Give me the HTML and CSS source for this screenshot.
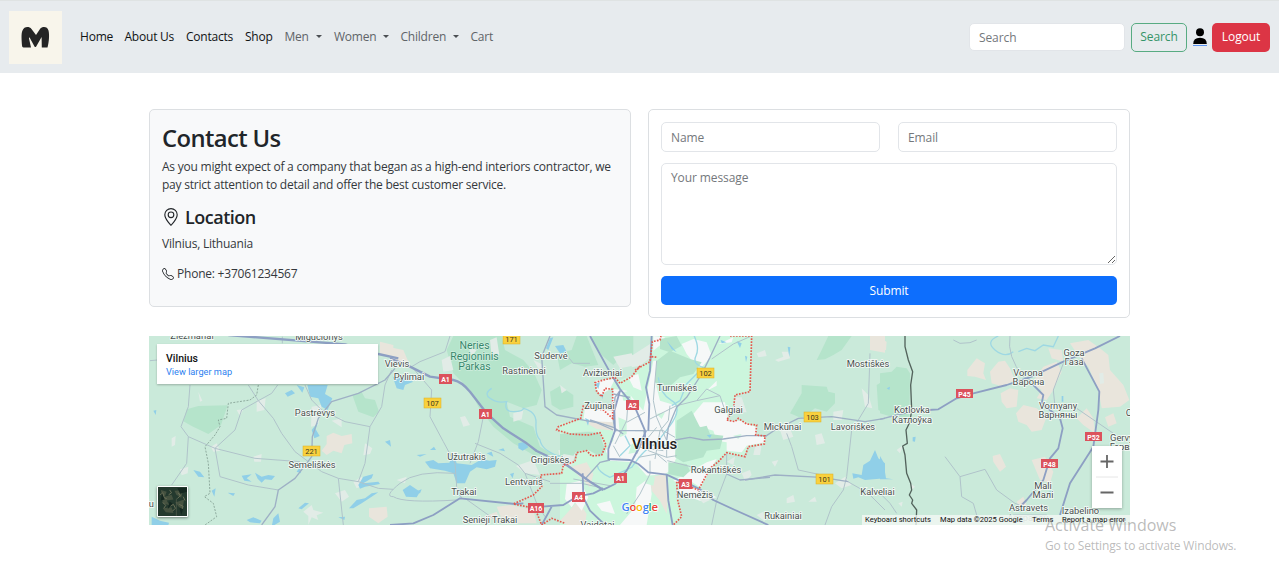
FILE: index.html
```html
<!DOCTYPE html>
<html lang="en">
<head>
<meta charset="utf-8">
<title>Contact Us</title>
<link rel="stylesheet" href="styles.css">
</head>
<body>
<header class="navbar">
  <a class="brand"><svg viewBox="0 0 53 53"><path d="M13 34.500C12.600 29 12 22.500 13.500 19.500C15 15.500 20 15 22.500 18L27 24L31 18C33.500 15 38.500 15.500 39.500 19.500C40.600 24 40 31 38.500 36.500H32.800L32.600 26L27.200 35.500Q26.300 36.600 25.500 35.500L20.600 26.500Q19.800 26.300 20 27.500L22 36.500H14.500Q13 36.500 13 34.500Z"/></svg></a>
  <nav class="links">
    <a>Home</a><a>About Us</a><a>Contacts</a><a>Shop</a>
    <a class="muted drop">Men</a><a class="muted drop">Women</a><a class="muted drop">Children</a><a class="muted">Cart</a>
  </nav>
  <form class="search">
    <input class="field" placeholder="Search">
    <button type="button" class="btn outline">Search</button>
    <a class="user"><svg viewBox="0 0 14 20"><circle cx="7" cy="5.200" r="4"/><path d="M0.200 17Q0.200 10.800 7 10.800T13.800 17Z"/><rect x="0" y="18" width="14" height="1" fill="#5b94f2"/></svg></a>
    <button type="button" class="btn danger">Logout</button>
  </form>
</header>
<main class="container">
  <section class="row">
    <article class="card info">
      <h1>Contact Us</h1>
      <p class="lead">As you might expect of a company that began as a high-end interiors contractor, we<br>pay strict attention to detail and offer the best customer service.</p>
      <h2><svg class="pin" viewBox="0 0 16 16"><path d="M12.166 8.940c-.524 1.062-1.234 2.120-1.960 3.070A32 32 0 0 1 8 14.580a32 32 0 0 1-2.206-2.570c-.726-.950-1.436-2.008-1.960-3.070C3.304 7.867 3 6.862 3 6a5 5 0 0 1 10 0c0 .862-.305 1.867-.834 2.940M8 16s6-5.686 6-10A6 6 0 0 0 2 6c0 4.314 6 10 6 10"/><path d="M8 8a2 2 0 1 1 0-4 2 2 0 0 1 0 4m0 1a3 3 0 1 0 0-6 3 3 0 0 0 0 6"/></svg>Location</h2>
      <p class="place">Vilnius, Lithuania</p>
      <p class="phone"><svg viewBox="0 0 16 16"><path d="M3.654 1.328a.678.678 0 0 0-1.015-.063L1.605 2.300c-.483.484-.661 1.169-.450 1.770a17.600 17.600 0 0 0 4.168 6.608 17.600 17.600 0 0 0 6.608 4.168c.601.211 1.286.033 1.770-.450l1.034-1.034a.678.678 0 0 0-.063-1.015l-2.307-1.794a.680.680 0 0 0-.580-.122l-2.190.547a1.750 1.750 0 0 1-1.657-.459L5.482 8.062a1.750 1.750 0 0 1-.460-1.657l.548-2.190a.680.680 0 0 0-.122-.580zM1.884.511a1.745 1.745 0 0 1 2.612.163L6.290 2.980c.329.423.445.974.315 1.494l-.547 2.190a.680.680 0 0 0 .178.643l2.457 2.457a.680.680 0 0 0 .644.178l2.189-.547a1.750 1.750 0 0 1 1.494.315l2.306 1.794c.829.645.905 1.870.163 2.611l-1.034 1.034c-.740.740-1.846 1.065-2.877.702a18.600 18.600 0 0 1-7.010-4.420 18.600 18.600 0 0 1-4.420-7.009c-.362-1.030-.037-2.137.703-2.877z"/></svg>Phone: +37061234567</p>
    </article>
    <form class="card contact">
      <div class="pair"><input class="field" placeholder="Name"><input class="field" placeholder="Email"></div>
      <textarea class="field area" placeholder="Your message"></textarea>
      <button type="button" class="btn primary">Submit</button>
    </form>
  </section>
  <section class="map">
    <svg class="canvas" viewBox="149 336 981 189">
      <rect x="149" y="336" width="981" height="189" fill="#caeada"/>
      <!-- land cover: left -->
      <g transform="translate(145 330) scale(.33333)">
        <path class="wood" d="M125 238L160 228L248 226L228 285L190 312L140 288L115 274ZM622 195L650 186L660 205L690 210L702 245L685 262L640 245Z"/>
        <path class="sand" d="M545 318L565 308L590 318L620 312L622 340L598 345L590 370L565 362L545 375L530 362L545 342ZM705 35L745 45V80L705 75ZM672 535L725 530L728 560L700 580L672 560Z"/>
        <path class="town" d="M335 212L362 205L358 240L335 245ZM160 185L172 212L165 215ZM80 325L92 318L90 345L80 350ZM198 350L215 340L225 362L205 365ZM105 418L130 410L128 430L110 436ZM325 380L350 372L348 395L328 395ZM500 230L530 225L520 285L498 290ZM660 340L682 355L675 372L655 376ZM475 545L500 525L505 540L535 548L515 556L520 570L500 562L490 585L490 558ZM570 490L600 480L612 500L590 515ZM560 272L590 265L590 292ZM275 240L295 238L285 258ZM45 518L80 515L60 530ZM625 455L650 440L660 465L635 475Z"/>
        <path class="lake" d="M487 165H548L540 192L562 205L548 240L530 230L520 205L495 200ZM500 300L520 275L512 298L524 318L508 325ZM420 190L440 180L450 190L428 200ZM455 165L478 172L472 188ZM145 420L165 425L178 442L160 440ZM290 437L320 433L305 445L320 455L298 452ZM330 428L350 440L370 435L390 438L380 450L360 448L350 458L338 446ZM640 465L655 440L685 432L680 445L655 460L700 455L705 462L660 470L645 476ZM612 535L635 510L660 505L680 490L700 487L680 500L650 520L625 535ZM20 560L45 572L72 578L70 586H20ZM385 565L400 550L405 575L380 590ZM305 570L325 562L350 572L345 580L315 577ZM200 482L212 475L208 500ZM248 488L270 490L265 498ZM455 425L465 410L468 430ZM720 335L735 330L738 350ZM580 562L600 560L598 570ZM25 242L34 240L32 255ZM460 535L480 518L492 520L470 538Z"/>
      </g>
      <!-- land cover: centre-left -->
      <g transform="translate(390 330) scale(.33333)">
        <path class="wood" d="M190 18H335L345 60L400 90L430 125L455 180L440 225L400 235L350 215L360 260L430 290L450 350L500 380L430 375L370 340L310 290L265 230L240 180L190 130L170 60ZM480 185L510 168L550 195L550 230L510 240L485 225Z"/>
        <path class="wood" d="M600 18H730V75L690 85L670 105L635 75ZM500 70L545 60L560 18H590L625 105L585 110L545 100L510 120Z"/>
        <path class="sand" d="M0 52L40 60L55 95L20 115L0 105ZM320 530L360 525L430 540L440 580H340ZM280 560L320 545L330 575Z"/>
        <path class="town" d="M300 30L320 22L328 75L305 80ZM155 90L180 78L190 120L160 125ZM378 408L430 390L450 435L405 430ZM210 262L225 258L240 285L220 290ZM370 250L400 240L395 268L370 275ZM235 50L260 60L245 80ZM430 90L460 105L448 120ZM510 165L530 180L515 190ZM20 450L50 440L45 460ZM505 360L550 362L535 395L510 390ZM670 80L725 70L740 105L690 115Z"/>
        <path class="lake" d="M8 140L30 140L70 155L45 165L40 180L20 175ZM105 395L130 390L145 400L178 398L190 370L200 400L245 405L275 388L298 392L320 390L315 410L290 418L260 412L240 425L225 460L200 460L190 430L165 422L120 415ZM38 480L60 465L90 485L80 502L48 500ZM385 340L405 335L415 352L398 362L385 355ZM495 48L520 45L530 65L510 70ZM468 55L480 25L490 22L475 60ZM120 360L132 350L138 360ZM290 370L305 365L310 380ZM360 432L372 428L368 445ZM200 475L220 480L212 500L205 495ZM325 360L340 355L345 364ZM80 375L110 372L90 380ZM75 485L95 478L90 490Z"/>
        <path class="river" d="M305 175Q280 190 300 205T350 215Q340 245 370 245T400 235Q440 245 438 280T450 330Q455 360 505 378L550 375"/>
      </g>
      <!-- land cover: city of Vilnius -->
      <g transform="translate(560 334) scale(.33333)">
        <path class="park" d="M0 405L40 385L60 350L85 348L120 370L137 350L120 295L85 292L0 300V268L65 258L70 215L125 235L155 255L160 165L105 170L112 140L160 145L215 125L270 75L275 6H575L570 170L525 185L520 230L500 262L540 258L590 270L588 300L615 305V328L565 340L550 365L500 358L460 390L420 468L350 440L352 490L365 550L340 573H0Z"/>
        <path class="sand" d="M30 400L80 385L100 420L90 460L60 430ZM270 430L315 420L325 450L320 540L300 500L275 470ZM90 255L150 235L165 290L110 285L75 265ZM20 470L60 462L65 490L20 485ZM0 560L55 500L80 540L75 573H20Z"/>
        <path class="city" d="M105 140L165 135L150 165L135 175L125 185L108 165ZM160 165L200 170L250 230L270 130L280 80L320 80L285 140L300 200L350 215L345 260L345 300L350 370L330 410L315 420L260 425L225 385L150 380L137 350L160 320L160 265L70 260L75 220L155 230ZM205 130L235 120L245 170L220 160ZM340 440L440 385L470 375L420 460L390 440L350 445ZM400 240L430 205L495 205L505 260L540 260L590 280L588 305L615 310V325L560 335L545 355L500 350L500 325L470 320L460 290L410 275ZM365 30L400 15L440 25L455 65L425 100L400 85L380 60ZM475 30L520 10L515 25ZM280 6L315 10L305 30L280 50ZM20 450L60 440L85 490L65 530L45 505L35 520L15 495ZM230 460L270 430L275 480L260 573H180L225 520ZM110 510L150 500L165 540L125 530ZM440 170L470 140L470 155ZM355 450L420 465L470 490L420 500L360 480Z"/>
        <path class="park" d="M112 390L170 380L180 420L145 435L120 420ZM175 250L200 260L200 300L180 310ZM260 425L285 430L280 455L255 448ZM215 330L235 325L230 355L205 360ZM185 175L210 170L215 200L190 200ZM520 305L545 300L535 315ZM290 240L315 235L305 255Z"/>
        <path class="wood" d="M350 260L395 230L420 280L440 275L450 300L490 305L480 345L440 350L430 370L370 385L345 370ZM325 385L380 390L390 410L370 430L325 420ZM290 80L330 50L390 75L425 85L400 120L360 130L320 165L285 145ZM300 15L350 6L365 35L330 55L300 45ZM0 300L85 294L118 298L134 345L120 366L85 348L58 350L40 380L0 372Z"/>
        <path class="town" d="M215 65L270 30V72L240 95L215 100ZM525 190L545 190L560 235L525 235ZM10 360L40 365L50 350L35 395L5 400Z"/>
        <path class="lake" d="M75 252L88 258L84 275ZM105 150L120 145L115 165ZM122 180L130 182L127 195ZM482 18L500 25L485 28ZM530 22L545 28L540 42ZM555 65L562 68L558 85ZM320 20L350 55L335 45ZM440 303L455 302L450 312Z"/>
        <path class="river" d="M295 130Q300 180 335 200T330 275T270 340T215 400L150 430Q115 415 112 395M400 0Q420 40 408 65T430 100L380 150L360 200L335 215M195 305L210 335L180 365"/>
      </g>
      <!-- land cover: centre-right -->
      <g transform="translate(635 330) scale(.33333)">
        <path class="wood" d="M545 90L560 60L580 18H650L620 60L595 75L570 88ZM465 250L500 190L500 165L575 170L580 185L600 190L600 220L575 245L540 235L500 265ZM725 165L750 150V250L730 240Z"/>
        <path class="town" d="M365 70L390 60L395 78L370 82ZM420 90L445 80L440 65L460 65L465 85L430 95ZM320 430L345 420L350 435L330 455L325 440ZM435 300L465 295L475 320L445 330ZM540 315L560 310L570 340L545 345ZM680 175L700 195L712 235L690 230ZM705 35L720 30L715 55ZM455 505L475 495L480 515L455 520ZM365 555L385 545L390 575ZM600 460L630 440L650 465L620 475ZM190 480L225 510L205 520L190 505ZM275 395L300 380L295 405ZM410 395L430 390L420 410ZM520 515L540 500L545 515ZM360 350L380 345L375 375L355 375ZM595 245L625 240L620 270L595 270Z"/>
        <path class="sand" d="M705 18H750V68L705 60Z"/>
        <path class="lake" d="M652 430L680 435L685 405L705 392L720 360L730 385L750 400V445L690 450L670 442L655 446ZM458 50L466 52L463 80Z"/>
      </g>
      <!-- land cover: right -->
      <g transform="translate(880 330) scale(.33333)">
        <path class="wood" d="M0 130L35 125L50 110L80 115L90 130L88 260L40 262L0 250Z"/>
        <path class="sand" d="M0 25L20 35L18 60L0 65ZM262 120L290 85L315 100L310 130L318 150L285 140L262 138ZM330 125L355 95L375 92L390 115L405 150L370 170L335 160ZM362 190L390 175L415 180L410 230L380 235L365 215ZM408 250L430 225L470 235L500 260L485 300L455 305L440 285L415 275ZM455 160L490 110L530 95L545 125L520 180L500 210L470 205L485 180ZM505 55L545 60L550 95L515 85ZM570 40L625 30L660 55L685 75L690 120L730 165L748 210L720 230L665 235L655 180L625 110L590 70ZM590 265L620 235L640 265L645 310L610 285ZM675 262L700 250L710 280L685 290ZM338 378L360 372L378 410L360 425L340 395ZM455 390L495 380L520 425L510 460L480 450ZM410 515L430 500L440 525L420 535Z"/>
        <path class="lake" d="M0 378L10 395L18 445L40 448H0ZM98 322L107 320L105 335L98 334ZM545 198L550 198L550 215L545 215ZM495 490L520 480L518 495ZM20 175L30 170L28 180Z"/>
        <path class="river" d="M355 18Q315 35 345 60T400 65M415 65L440 55L465 62L490 45L520 50L535 18"/>
        <path class="town" d="M50 360L70 345L60 370ZM658 130L670 128L672 160L660 162ZM90 460L105 470L95 480ZM55 520L68 515L65 530Z"/>
      </g>
      <!-- minor roads -->
      <g class="minor" transform="translate(145 330) scale(.33333)">
        <path d="M135 165L130 230L108 290L130 320L210 355L330 385L465 395M210 355L270 300L290 240L340 212L310 165M340 212L380 190L398 165M340 212L385 265L410 310L450 365L490 395M210 355L225 440L310 465L400 480M130 320L125 400L80 465M480 165L500 210L530 240L600 275L675 290L710 230L720 165L740 120M675 290L660 400L640 455L580 445M640 455L700 475L745 478M580 445L595 585M412 20V40M15 92L60 88M490 395L530 425L580 445"/>
        <path class="mid" d="M750 115L720 150L640 190L560 215L520 265L502 320L500 380L485 400L450 445L400 480L390 530L350 585"/>
      </g>
      <g class="minor" transform="translate(390 330) scale(.33333)">
        <path d="M65 110L90 95L165 65L180 18M65 110L125 180L120 260L160 335L195 400L200 470L215 505M280 260L265 335L240 400M195 430Q80 420 30 460T10 500M255 340L330 370L385 405L405 430L480 455M405 430L440 520L465 560M225 505L330 580M480 460L575 460L640 475M530 75L550 100L600 100M10 500Q40 520 200 510"/>
        <path class="mid" d="M480 18L455 80L465 230L500 255L620 278L670 300"/>
      </g>
      <g class="minor" transform="translate(560 334) scale(.33333)">
        <path d="M270 255L350 215L410 200L480 185L495 230M225 290L310 290L345 310M290 80L280 200L290 250L320 320L320 370M250 290L265 350L320 370L350 365M230 320L300 340L350 320M270 380L270 420L240 480L200 540M322 380L400 400M40 435L150 455M200 265L255 235M300 290L325 260L330 215M230 360L245 330L265 310L290 280M235 370L290 360L320 385M500 355L500 420L470 500L455 573M455 75L520 30L570 8M410 200L440 165L480 185M300 290L285 375M240 340L310 350M205 190L200 260L165 330M180 370L160 335"/>
        <path class="mid" d="M480 6L450 70L425 120L380 190L350 220L325 280L320 320M255 290L165 290M345 318L390 310L430 318L490 315L560 305L620 305M165 290L160 260L165 190L180 170M75 435L120 385L150 378M500 420L540 438L630 430M160 180L210 190M90 258L160 280L190 300"/>
      </g>
      <g class="minor" transform="translate(635 330) scale(.33333)">
        <path d="M455 310L470 350L490 420L560 435M705 70L700 220L670 270L650 300L635 440L625 480L590 530L570 585M630 450L700 490L750 540"/>
        <path class="mid" d="M390 320L420 300L490 265L590 260L690 275L750 265M330 450L420 435L560 442L640 455"/>
      </g>
      <g class="minor" transform="translate(880 330) scale(.33333)">
        <path d="M220 30L240 40L270 38L290 30M390 18Q380 80 430 140L455 150M195 380L240 440L315 418L350 480L405 520L430 530M240 440L245 500L280 520L290 555M0 490L30 520L50 550M590 235L700 310M550 100L520 180L525 230M400 555H500"/>
        <path class="mid" d="M0 268L50 255L100 245"/>
      </g>
      <!-- highways -->
      <g class="highway" transform="translate(145 330) scale(.33333)"><path d="M250 15L600 43L700 72L760 85"/></g>
      <g class="highway" transform="translate(390 330) scale(.33333)"><path d="M0 85L60 110L120 140L190 150Q215 155 240 185L290 250L340 295L410 340L440 363L530 405L600 455L640 480"/><path class="secondary" d="M0 585L70 580L130 555L210 505L375 522L400 520M455 530L520 525L560 500L610 490L640 475M455 585L485 530"/></g>
      <g class="highway" transform="translate(560 334) scale(.33333)"><path class="secondary" d="M90 6L150 115L180 165L225 220L255 290L255 310M275 6L270 110L258 160L268 210L265 290M130 467L165 450L200 410L235 345L258 290M68 418L70 490L90 530L135 573M180 170L163 230L165 290L145 345L145 375L210 378L235 390L265 415L320 422L390 455M320 422L325 500L338 573"/></g>
      <g class="highway" transform="translate(635 330) scale(.33333)"><path class="secondary" d="M165 463L195 478L235 510L300 540L400 585"/></g>
      <g class="highway" transform="translate(880 330) scale(.33333)"><path class="secondary" d="M145 240L175 238L230 205L280 190L380 165L455 140L550 95L645 55L720 18M455 160L490 195L485 220L540 265L548 295L535 355L510 385L490 450L440 510L425 525M605 85L658 185L655 240L640 350L570 460L540 555"/></g>
      <!-- boundaries -->
      <path class="district" transform="translate(145 330) scale(.33333)" d="M340 165L335 195L315 210L250 220L245 265L220 270L225 290L210 315L180 350L190 400L195 490L178 500L205 520L215 560L180 585"/>
      <path class="border" transform="translate(880 330) scale(.33333)" d="M75 18V50L85 90L98 125L92 165L95 240L90 275L78 300L82 340L68 348L75 375L80 430L92 460L95 480L88 495L98 510L95 520L110 540L108 585"/>
      <path class="limits" transform="translate(390 330) scale(.33333)" d="M750 108L725 140L690 160L675 142L640 150L615 158L620 185L635 200L645 175L668 178L668 265L640 240L580 228L572 265L505 290L500 300L540 312L595 315L630 308L648 345L635 375L605 378L590 362L560 368L555 395L520 405L515 430L452 435L455 470L430 495L370 522L435 535L455 585L485 565L525 580"/>
      <path class="limits" transform="translate(635 330) scale(.33333)" d="M0 120L45 95L52 35L75 30L78 18M50 80L68 82M285 18H350L345 185L300 195L295 240L275 270L300 275L310 265L335 282L365 285L362 315L390 318L388 342L340 350L330 380L275 368L250 395L225 415L190 480L125 455L128 510L140 560L115 585"/>
      <!-- road shields -->
      <g class="shield-y"><rect x="303" y="446" width="17" height="10"/><rect x="424" y="398" width="17" height="10"/><rect x="503" y="334" width="17" height="10"/><rect x="697" y="368" width="17" height="10"/><rect x="804" y="412" width="17" height="10"/><rect x="816" y="474" width="17" height="10"/></g>
      <g class="shield-r"><rect x="439" y="374" width="13" height="10"/><rect x="479" y="409" width="13" height="10"/><rect x="626" y="400" width="13" height="10"/><rect x="614" y="473" width="13" height="10"/><rect x="572" y="492" width="13" height="10"/><rect x="528" y="503" width="16" height="10"/><rect x="679" y="479" width="13" height="10"/><rect x="956" y="389" width="17" height="9"/><rect x="1085" y="432" width="17" height="9"/><rect x="1041" y="459" width="17" height="9"/></g>
      <g class="num"><text x="311.500" y="453.700">221</text><text x="432.500" y="405.700">107</text><text x="511.500" y="342">171</text><text x="705.500" y="376">102</text><text x="812.500" y="419.700">103</text><text x="824.500" y="481.700">101</text></g>
      <g class="num white"><text x="445.500" y="382">A1</text><text x="485.500" y="417">A1</text><text x="632.500" y="408">A2</text><text x="620.500" y="481">A1</text><text x="578.500" y="500">A4</text><text x="536" y="511">A16</text><text x="685.500" y="487">A3</text><text x="964.500" y="396.500">P45</text><text x="1093.500" y="439.500">P52</text><text x="1049.500" y="466.500">P48</text></g>
      <!-- place names -->
      <g class="place-name">
        <text x="192" y="339">Žiežmariai</text><text x="319" y="340">Migučionys</text><text x="397" y="367">Vievis</text><text x="409" y="379.500">Pylimai</text><text x="315" y="416">Pastrėvys</text><text x="312" y="467.500">Semeliškės</text><text x="149" y="507">žu</text>
        <text x="551" y="359">Sudervė</text><text x="524" y="374">Rastinėnai</text><text x="602.500" y="375.500">Avižieniai</text><text x="599.500" y="409">Zujūnai</text><text x="466.500" y="460">Užutrakis</text><text x="550" y="463">Grigiškės</text><text x="524" y="485">Lentvaris</text><text x="464" y="494.500">Trakai</text><text x="490" y="522.500">Senieji Trakai</text><text x="597.500" y="527.500">Vaidotai</text>
        <text x="677" y="391">Turniškės</text><text x="728.500" y="412.500">Galgiai</text><text x="782.500" y="429.500">Mickūnai</text><text x="853" y="430">Lavoriškės</text><text x="716" y="473">Rokantiškės</text><text x="695" y="498">Nemėžis</text><text x="783" y="518.500">Rukainiai</text><text x="868" y="366.500">Mostiškės</text><text x="877.500" y="494.500">Kalveliai</text>
        <text x="912" y="413">Kotlovka</text><text x="912" y="422.500">Катлоўка</text><text x="1028" y="376">Vorona</text><text x="1028.500" y="385">Варона</text><text x="1074" y="356">Goza</text><text x="1074" y="365">Газа</text><text x="1058" y="409">Vornyany</text><text x="1058" y="418">Варняны</text><text x="1043" y="488.500">Mali</text><text x="1043" y="497.500">Малі</text><text x="1028.500" y="511">Astravets</text><text x="1028" y="521" opacity=".4">Астравец</text><text x="1080.500" y="513.500">Izabelino</text><text x="1128" y="441">Gervyaty</text><text x="1128" y="450">Гервяты</text><text x="1129" y="416">O</text>
        <text class="capital" x="654.500" y="449">Vilnius</text>
      </g>
      <g class="park-name"><text x="474.500" y="349">Neries</text><text x="474.500" y="359.500">Regioninis</text><text x="474.500" y="370">Parkas</text></g>
      <text class="google" x="621.500" y="510.500"><tspan fill="#4285f4">G</tspan><tspan fill="#ea4335">o</tspan><tspan fill="#fbbc05">o</tspan><tspan fill="#4285f4">g</tspan><tspan fill="#34a853">l</tspan><tspan fill="#ea4335">e</tspan></text>
    </svg>
    <div class="map-card"><b>Vilnius</b><a>View larger map</a></div>
    <svg class="satellite" viewBox="0 0 30 30"><rect width="30" height="30" fill="#24392e"/><path d="M3 3L9 5L7 10L14 8L16 13L9 14L12 19L5 17ZM17 4L26 3L24 11L19 8ZM18 16L27 13L25 25L21 20ZM5 22L14 21L16 27L8 26Z" fill="#465240"/><path d="M2 8L5 6L6 11L9 12M12 3L14 6L11 8M5 16L8 19L6 22M12 20L16 18L18 22L15 25M21 6L23 9L20 12M22 18L26 20L24 25M26 10L28 14" stroke="#6c7058" stroke-width="1" fill="none"/><path d="M20 1H30V5L23 7ZM4 6L7 13L3 14ZM12 15L15 17L10 23ZM22 21L26 23L24 29Z" fill="#152720"/><path d="M19 12V30" stroke="#5d6653" stroke-width=".6"/></svg>
    <div class="zoom"><svg viewBox="0 0 30 62"><path d="M8.500 15.500H21.500M15 9V22M8.500 46.500H21.500" stroke="#666" stroke-width="1.800"/><path d="M4 31H26" stroke="#e6e6e6"/></svg></div>
    <div class="credits"><span>Keyboard shortcuts</span><span>Map data ©2025 Google</span><span>Terms</span><span>Report a map error</span></div>
  </section>
</main>
<aside class="watermark"><div class="big">Activate Windows</div><div>Go to Settings to activate Windows.</div></aside>
</body>
</html>
```

FILE: styles.css
```css
* { box-sizing: border-box; }
body {
  margin: 0;
  height: 566px;
  overflow: hidden;
  position: relative;
  background: #fff;
  color: #212529;
  font: 12px/18.3px "Open Sans", "Noto Sans", sans-serif;
  letter-spacing: -0.22px;
}
h1, h2, p { margin: 0; }
input, textarea, button { font: inherit; letter-spacing: -0.1px; margin: 0; }
.navbar {
  display: flex;
  align-items: center;
  width: 1279px;
  height: 73px;
  padding: 0 9px 0 9px;
  background: #e7ebee;
  border-top: 1px solid #dfe3e3;
}
.brand { width: 53px; height: 53px; background: #f8f5eb; }
.brand svg { display: block; width: 53px; height: 53px; fill: #242424; }
.links {
  display: grid;
  grid-template-columns: 44.500px 61.500px 59px 39.500px 49.500px 66.500px 70px 30px;
  margin-left: 18px;
  padding-top: 1px;
  white-space: nowrap;
  color: #101214;
}
.muted { color: #606468; }
.drop::after {
  content: "";
  display: inline-block;
  margin-left: 7px;
  vertical-align: 3px;
  border: 3.500px solid transparent;
  border-top-color: #4b4f53;
  border-bottom: 0;
}
.search { display: flex; align-items: center; margin-left: auto; }
.field {
  width: 100%;
  height: 30px;
  padding: 5px 9px;
  border: 1px solid #e2e5e9;
  border-radius: 5px;
  background: #fff;
  outline: 0;
  display: block;
}
.field::placeholder { color: #74787c; opacity: 1; }
.search .field { width: 156px; height: 28px; margin-right: 6px; padding-top: 5px; }
.btn {
  height: 29px;
  padding: 1px 0 0;
  border: 1px solid transparent;
  border-radius: 5px;
  color: #fff;
}
.outline { width: 56px; background: transparent; border-color: #58ab82; color: #359468; }
.user { width: 14px; height: 20px; margin: 0 5px 0 6px; }
.user svg { display: block; width: 14px; height: 20px; }
.danger { width: 58px; background: #dc3545; }
.container { width: 981px; margin: 36px 0 0 149px; }
.row { display: grid; grid-template-columns: 482px 482px; gap: 17px; align-items: start; }
.card { border: 1px solid #dcdfe2; border-radius: 5px; padding: 12px; }
.info { height: 198px; background: #f8f9fa; color: #34383c; }
h1 { font-size: 23.800px; line-height: 29px; font-weight: 600; letter-spacing: -0.600px; color: #212529; padding-top: 2px; }
.lead { padding-top: 5px; white-space: nowrap; }
h2 { display: flex; align-items: center; margin-top: 11px; font-size: 18px; line-height: 22px; font-weight: 600; letter-spacing: -0.500px; color: #212529; }
.pin { width: 18px; height: 18px; margin-right: 5px; fill: #212529; }
.place { padding-top: 7px; }
.phone { display: flex; align-items: center; margin-top: 12px; }
.phone svg { width: 12px; height: 12px; margin-right: 3px; fill: #212529; }
.contact { height: 209px; }
.pair { display: grid; grid-template-columns: 219px 219px; gap: 18px; }
.area { height: 102px; margin: 11px 0; resize: vertical; }
.primary { width: 100%; background: #0d6efd; display: block; }
.map { position: relative; margin-top: 18px; width: 981px; height: 189px; overflow: hidden; font-family: Roboto, sans-serif; letter-spacing: 0; }
.canvas { display: block; width: 981px; height: 189px; }
.wood { fill: #b5e4cb; }
.park { fill: #ccf6dd; }
.sand { fill: #e9e5dc; }
.town { fill: #e2ece7; }
.city { fill: #f6f8f8; }
.lake { fill: #90cfe8; }
.river { fill: none; stroke: #9ed8e3; stroke-width: 4; }
.minor { fill: none; stroke: #b0c3ca; stroke-width: 3; stroke-linejoin: round; }
.mid { stroke: #9eb0c5; stroke-width: 4; }
.highway { fill: none; stroke: #8d9fc3; stroke-width: 7; stroke-linejoin: round; }
.secondary { stroke-width: 5.500; }
.district { fill: none; stroke: #829e92; stroke-width: 2.500; stroke-dasharray: 6 4; }
.border { fill: none; stroke: #53635c; stroke-width: 4; stroke-linejoin: round; }
.limits { fill: none; stroke: #e5584e; stroke-width: 5; stroke-dasharray: 5 4; }
.shield-y { fill: #f9d13e; stroke: #dcae24; stroke-width: .5; }
.shield-r { fill: #db525c; }
.num { font-size: 7.500px; text-anchor: middle; fill: #40391c; }
.white { fill: #fff; font-weight: 700; font-size: 7px; }
.place-name { font-size: 9.300px; text-anchor: middle; fill: #48504e; stroke: #f6fbf8; stroke-width: 1.600px; paint-order: stroke; }
.capital { font-size: 15px; font-weight: 500; fill: #222; }
.park-name { font-size: 10.500px; text-anchor: middle; fill: #35866a; stroke: #dcf3e7; stroke-width: 1px; paint-order: stroke; }
.google { font: 600 11.300px "Open Sans", sans-serif; letter-spacing: -0.300px; stroke: #fff; stroke-width: 1.500px; paint-order: stroke; }
.map-card {
  position: absolute;
  left: 8px;
  top: 8px;
  width: 221px;
  height: 40px;
  padding: 8px 9px;
  display: flex;
  flex-direction: column;
  background: #fff;
  box-shadow: 0 1px 2px rgba(0,0,0,.25);
  font-size: 9.200px;
  line-height: 13px;
}
.map-card b { font-size: 10.500px; font-weight: 500; color: #111; }
.map-card a { color: #2d7ff0; line-height: 14px; }
.satellite { position: absolute; left: 8px; top: 150px; width: 31px; height: 31px; border: 1px solid #fff; border-radius: 1px; box-shadow: 0 1px 3px rgba(0,0,0,.45); }
.zoom { position: absolute; left: 943px; top: 110px; width: 30px; height: 62px; background: #fff; box-shadow: 0 1px 3px rgba(0,0,0,.3); }
.zoom svg { display: block; fill: none; }
.credits {
  position: absolute;
  right: 0;
  bottom: 0;
  width: 268px;
  height: 10px;
  display: grid;
  grid-template-columns: 75px 92px 30px 67px;
  padding-left: 3px;
  background: rgba(245,248,246,.75);
  font-size: 7.600px;
  line-height: 10px;
  white-space: nowrap;
  color: #111;
}
.watermark { position: absolute; left: 1045px; top: 514px; white-space: nowrap; color: rgba(130,130,130,.55); font-size: 12px; line-height: 19px; letter-spacing: -0.150px; }
.big { font-size: 16px; line-height: 22px; letter-spacing: 0; }
```
